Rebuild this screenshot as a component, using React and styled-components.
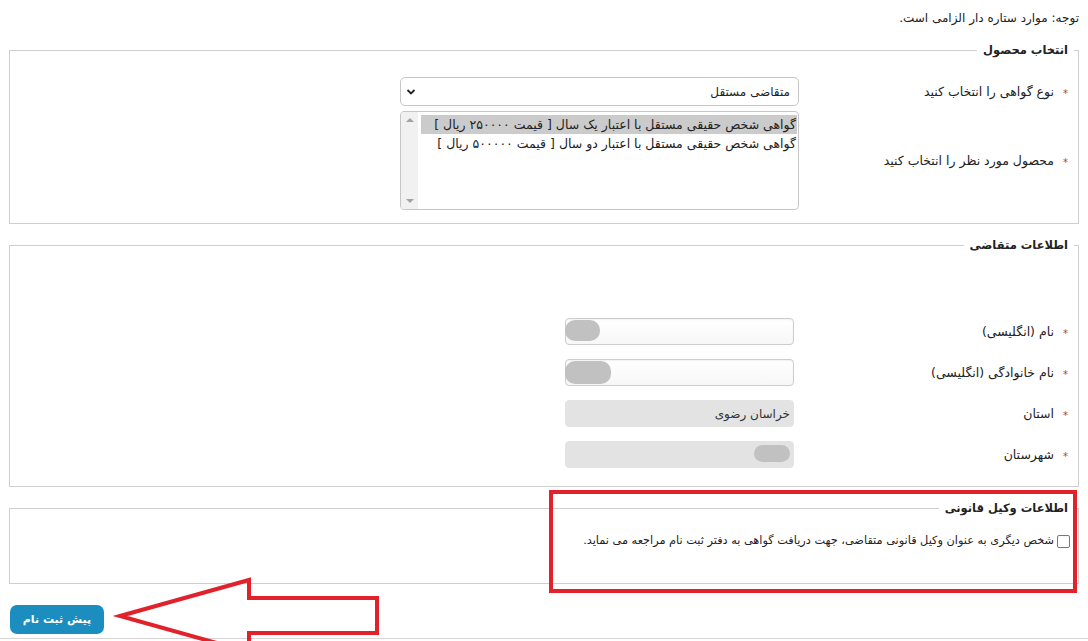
import React from "react";
import styled, { createGlobalStyle } from "styled-components";

const GlobalStyle = createGlobalStyle`
  html, body {
    margin: 0;
    padding: 0;
    background: #fff;
  }
  body {
    font-family: "DejaVu Sans", "Noto Sans", sans-serif;
    font-size: 12px;
    color: #222;
    direction: rtl;
  }
`;

const Page = styled.div`
  position: relative;
  height: 641px;
  overflow: hidden;
  padding: 10px 9px 0;
  box-sizing: border-box;
`;

const Note = styled.div`
  line-height: 16px;
  margin: 0 0 16px;
`;

const Fieldset = styled.fieldset`
  margin: 0 0 13px;
  padding: ${(p) => p.$pad || "0"};
  border: 1px solid #cfcfcf;
  min-width: 0;
`;

const Legend = styled.legend`
  padding: 0 6px;
  margin-right: 4px;
  font-weight: bold;
  font-size: 11.5px;
  line-height: 16px;
  color: #222;
`;

const Rows = styled.div`
  display: flex;
  flex-direction: column;
  gap: ${(p) => p.$gap || 5}px;
  padding-right: 10px;
`;

const Row = styled.div`
  display: flex;
  align-items: center;
`;

const LabelCell = styled.div`
  width: ${(p) => p.$w}px;
  flex: none;
  display: flex;
  align-items: center;
  font-size: 12.5px;
  line-height: 16px;
`;

const Star = styled.span`
  color: #c0392b;
  font-size: 10px;
  width: 6px;
  margin-left: 8px;
  position: relative;
  top: 2px;
`;

const SelectBox = styled.div`
  width: 399px;
  height: 29px;
  box-sizing: border-box;
  border: 1px solid #c6c6c6;
  border-radius: 5px;
  display: flex;
  align-items: center;
  justify-content: space-between;
  padding: 0 8px 0 5px;
  background: #fff;
`;

const ListBox = styled.div`
  width: 399px;
  height: 99px;
  box-sizing: border-box;
  border: 1px solid #c6c6c6;
  border-radius: 4px;
  display: flex;
  overflow: hidden;
`;

const Options = styled.div`
  flex: 1;
  padding: 3px 1px 0 3px;
  font-size: 12.5px;
`;

const Option = styled.div`
  height: 19px;
  line-height: 19px;
  padding-right: 1px;
  white-space: nowrap;
  background: ${(p) => (p.$selected ? "#cbcbcb" : "transparent")};
`;

const ScrollBar = styled.div`
  width: 17px;
  flex: none;
  background: #f1f1f1;
  display: flex;
  flex-direction: column;
  justify-content: space-between;
  align-items: center;
  padding: 6px 0;
  box-sizing: border-box;
`;

const Arrow = styled.span`
  width: 0;
  height: 0;
  border-left: 4px solid transparent;
  border-right: 4px solid transparent;
  ${(p) =>
    p.$up
      ? "border-bottom: 4px solid #a3a3a3;"
      : "border-top: 4px solid #a3a3a3;"}
`;

const InputWrap = styled.div`
  position: relative;
  width: 229px;
  height: 27px;
`;

const TextInput = styled.div`
  width: 100%;
  height: 100%;
  box-sizing: border-box;
  border-radius: 4px;
  border: 1px solid ${(p) => (p.$disabled ? "#e3e3e3" : "#cdcdcd")};
  background: ${(p) =>
    p.$disabled ? "#e3e3e3" : "linear-gradient(#fff, #f7f7f7)"};
  box-shadow: ${(p) =>
    p.$disabled ? "none" : "inset 0 1px 2px rgba(0,0,0,0.06)"};
  padding: 0 3px;
  display: flex;
  align-items: center;
  color: #333;
`;

const Blob = styled.span`
  position: absolute;
  top: ${(p) => p.$top}px;
  height: ${(p) => p.$h}px;
  width: ${(p) => p.$w}px;
  ${(p) => (p.$side === "left" ? "left: 0;" : "right: 4px;")}
  border-radius: 10px;
  background: #c1c1c1;
`;

const CheckRow = styled.label`
  display: flex;
  align-items: center;
  gap: 3px;
  padding-right: 8px;
  line-height: 16px;
  font-size: 11.3px;
`;

const Check = styled.span`
  width: 11px;
  height: 11px;
  border: 1px solid #777;
  border-radius: 2px;
  background: #fff;
  flex: none;
`;

const Footer = styled.div`
  display: flex;
  justify-content: flex-end;
  padding-left: 1px;
  margin-top: 21px;
`;

const Button = styled.button`
  width: 94px;
  height: 29px;
  border: none;
  border-radius: 7px;
  background: #1b8dbf;
  color: #fff;
  font-family: inherit;
  font-size: 11px;
  font-weight: bold;
  cursor: pointer;
`;

const RedBox = styled.div`
  position: absolute;
  left: 549px;
  top: 490px;
  width: 528px;
  height: 103px;
  box-sizing: border-box;
  border: 4px solid #e2222b;
  pointer-events: none;
`;

const ArrowSvg = styled.svg`
  position: absolute;
  left: 0;
  top: 560px;
  pointer-events: none;
`;

const Divider = styled.div`
  position: absolute;
  left: 0;
  right: 0;
  top: 638px;
  border-top: 1px solid #d4d4d4;
`;

const Field = ({ label, w, children }) => (
  <Row>
    <LabelCell $w={w}>
      <Star>*</Star>
      <span>{label}</span>
    </LabelCell>
    {children}
  </Row>
);

export default function App() {
  return (
    <Page>
      <GlobalStyle />
      <Note>توجه: موارد ستاره دار الزامی است.</Note>

      <Fieldset $pad="19px 0 13px">
        <Legend>انتخاب محصول</Legend>
        <Rows $gap={5}>
          <Field label="نوع گواهی را انتخاب کنید" w={269}>
            <SelectBox>
              <span>متقاضی مستقل</span>
              <svg width="10" height="8" viewBox="0 0 10 8">
                <path d="M1.5 2 L5 5.5 L8.5 2" fill="none" stroke="#222" strokeWidth="1.8" />
              </svg>
            </SelectBox>
          </Field>
          <Field label="محصول مورد نظر را انتخاب کنید" w={269}>
            <ListBox>
              <Options>
                <Option $selected>
                  گواهی شخص حقیقی مستقل با اعتبار یک سال [ قیمت ۲۵۰۰۰۰ ریال ]
                </Option>
                <Option>
                  گواهی شخص حقیقی مستقل با اعتبار دو سال [ قیمت ۵۰۰۰۰۰ ریال ]
                </Option>
              </Options>
              <ScrollBar>
                <Arrow $up />
                <Arrow />
              </ScrollBar>
            </ListBox>
          </Field>
        </Rows>
      </Fieldset>

      <Fieldset $pad="65px 0 18px">
        <Legend>اطلاعات متقاضی</Legend>
        <Rows $gap={14}>
          <Field label="نام (انگلیسی)" w={274}>
            <InputWrap>
              <TextInput />
              <Blob $side="left" $top={2} $h={21} $w={35} />
            </InputWrap>
          </Field>
          <Field label="نام خانوادگی (انگلیسی)" w={274}>
            <InputWrap>
              <TextInput />
              <Blob $side="left" $top={2} $h={23} $w={46} />
            </InputWrap>
          </Field>
          <Field label="استان" w={274}>
            <InputWrap>
              <TextInput $disabled>خراسان رضوی</TextInput>
            </InputWrap>
          </Field>
          <Field label="شهرستان" w={274}>
            <InputWrap>
              <TextInput $disabled />
              <Blob $side="right" $top={4} $h={17} $w={36} />
            </InputWrap>
          </Field>
        </Rows>
      </Fieldset>

      <Fieldset $pad="17px 0 34px">
        <Legend>اطلاعات وکیل قانونی</Legend>
        <CheckRow>
          <Check />
          <span>
            شخص دیگری به عنوان وکیل قانونی متقاضی، جهت دریافت گواهی به دفتر ثبت نام مراجعه می نماید.
          </span>
        </CheckRow>
      </Fieldset>

      <Footer>
        <Button>پیش ثبت نام</Button>
      </Footer>

      <Divider />
      <RedBox />
      <ArrowSvg width="400" height="81" viewBox="0 0 400 81">
        <polygon
          points="120,56 249,20 249,38 377,38 377,73 249,73 249,92"
          fill="none"
          stroke="#e2222b"
          strokeWidth="4"
          strokeLinejoin="miter"
        />
      </ArrowSvg>
    </Page>
  );
}
